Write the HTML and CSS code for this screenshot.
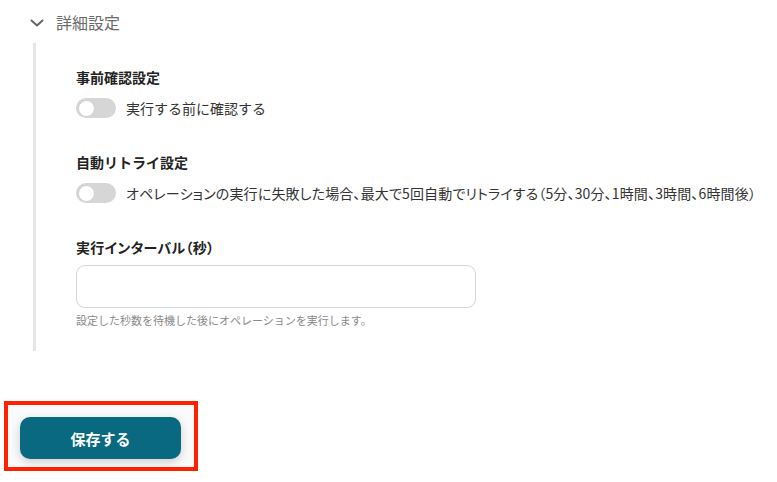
FILE: index.html
```html
<!DOCTYPE html>
<html lang="ja">
<head>
<meta charset="utf-8">
<link rel="stylesheet" href="styles.css">
</head>
<body>
<div class="page">
  <div class="collapse-head">
    <svg class="chevron" width="14" height="10" viewBox="0 0 14 10"><polyline points="1.5,2.5 7,7.5 12.5,2.5" fill="none" stroke="#666" stroke-width="2" stroke-linecap="round" stroke-linejoin="round"/></svg>
    <span class="collapse-title">詳細設定</span>
  </div>
  <div class="section">
    <div class="field">
      <div class="label">事前確認設定</div>
      <div class="toggle-row">
        <span class="toggle"><span class="knob"></span></span>
        <span class="toggle-text">実行する前に確認する</span>
      </div>
    </div>
    <div class="field">
      <div class="label">自動リトライ設定</div>
      <div class="toggle-row">
        <span class="toggle"><span class="knob"></span></span>
        <span class="toggle-text toggle-text-long">オペレーションの実行に失敗した場合、最大で5回自動でリトライする（5分、30分、1時間、3時間、6時間後）</span>
      </div>
    </div>
    <div class="field">
      <div class="label label-palt">実行インターバル（秒）</div>
      <input class="input" type="text">
      <div class="help">設定した秒数を待機した後にオペレーションを実行します。</div>
    </div>
  </div>
  <div class="save-wrap">
    <button class="save-btn">保存する</button>
  </div>
</div>
</body>
</html>
```

FILE: styles.css
```css
* { box-sizing: border-box; }
html, body { margin: 0; padding: 0; background: #fff; }
body {
  font-family: "Noto Sans CJK JP", "Noto Sans", sans-serif;
  color: #222;
  overflow: hidden;
}
.page { width: 777px; height: 482px; }
.collapse-head {
  display: flex;
  gap: 12px;
  padding: 10px 0 0 30px;
  height: 43px;
  align-items: flex-start;
}
.chevron { margin-top: 8px; }
.collapse-title {
  font-size: 16px;
  line-height: 24px;
  color: #6b6b6b;
}
.section {
  margin-left: 33px;
  border-left: 3px solid #e6e6e6;
  padding: 24px 0 23px 40px;
  display: flex;
  flex-direction: column;
  gap: 34px;
}
.label {
  font-size: 14px;
  line-height: 20px;
  font-weight: 700;
  color: #222;
}
.label-palt {
  font-feature-settings: "palt";
  letter-spacing: 0.3px;
}
.toggle-row {
  display: flex;
  align-items: center;
  gap: 10px;
  margin-top: 11px;
  height: 20px;
}
.toggle {
  width: 40px;
  height: 20px;
  border-radius: 10px;
  background: #d6d6d6;
  display: flex;
  align-items: center;
  padding: 0 2px;
  flex: none;
}
.knob {
  width: 17px;
  height: 17px;
  border-radius: 50%;
  background: #fff;
  border: 1px solid #cfcfcf;
}
.toggle-text {
  font-size: 14px;
  line-height: 20px;
  color: #333;
  white-space: nowrap;
}
.toggle-text-long {
  font-feature-settings: "palt";
  letter-spacing: 0.15px;
}
.input {
  display: block;
  margin-top: 8px;
  width: 400px;
  height: 43px;
  border: 1px solid #d3d6db;
  border-radius: 9px;
  background: #fff;
  font: inherit;
}
.help {
  margin-top: 4px;
  font-size: 11px;
  line-height: 16px;
  color: #8a8a8a;
}
.save-wrap {
  margin: 50px 0 0 4px;
  width: 194px;
  height: 70px;
  border: 4px solid #ff2200;
  padding: 12px 13px 8px 12px;
  background: #fafafa;
}
.save-btn {
  display: block;
  width: 161px;
  height: 42px;
  border: none;
  border-radius: 10px;
  background: #086980;
  color: #fff;
  font-family: "Noto Sans CJK JP", sans-serif;
  font-size: 15px;
  font-weight: 700;
  box-shadow: 0 3px 10px rgba(0,0,0,0.18);
  padding: 0;
}
```
